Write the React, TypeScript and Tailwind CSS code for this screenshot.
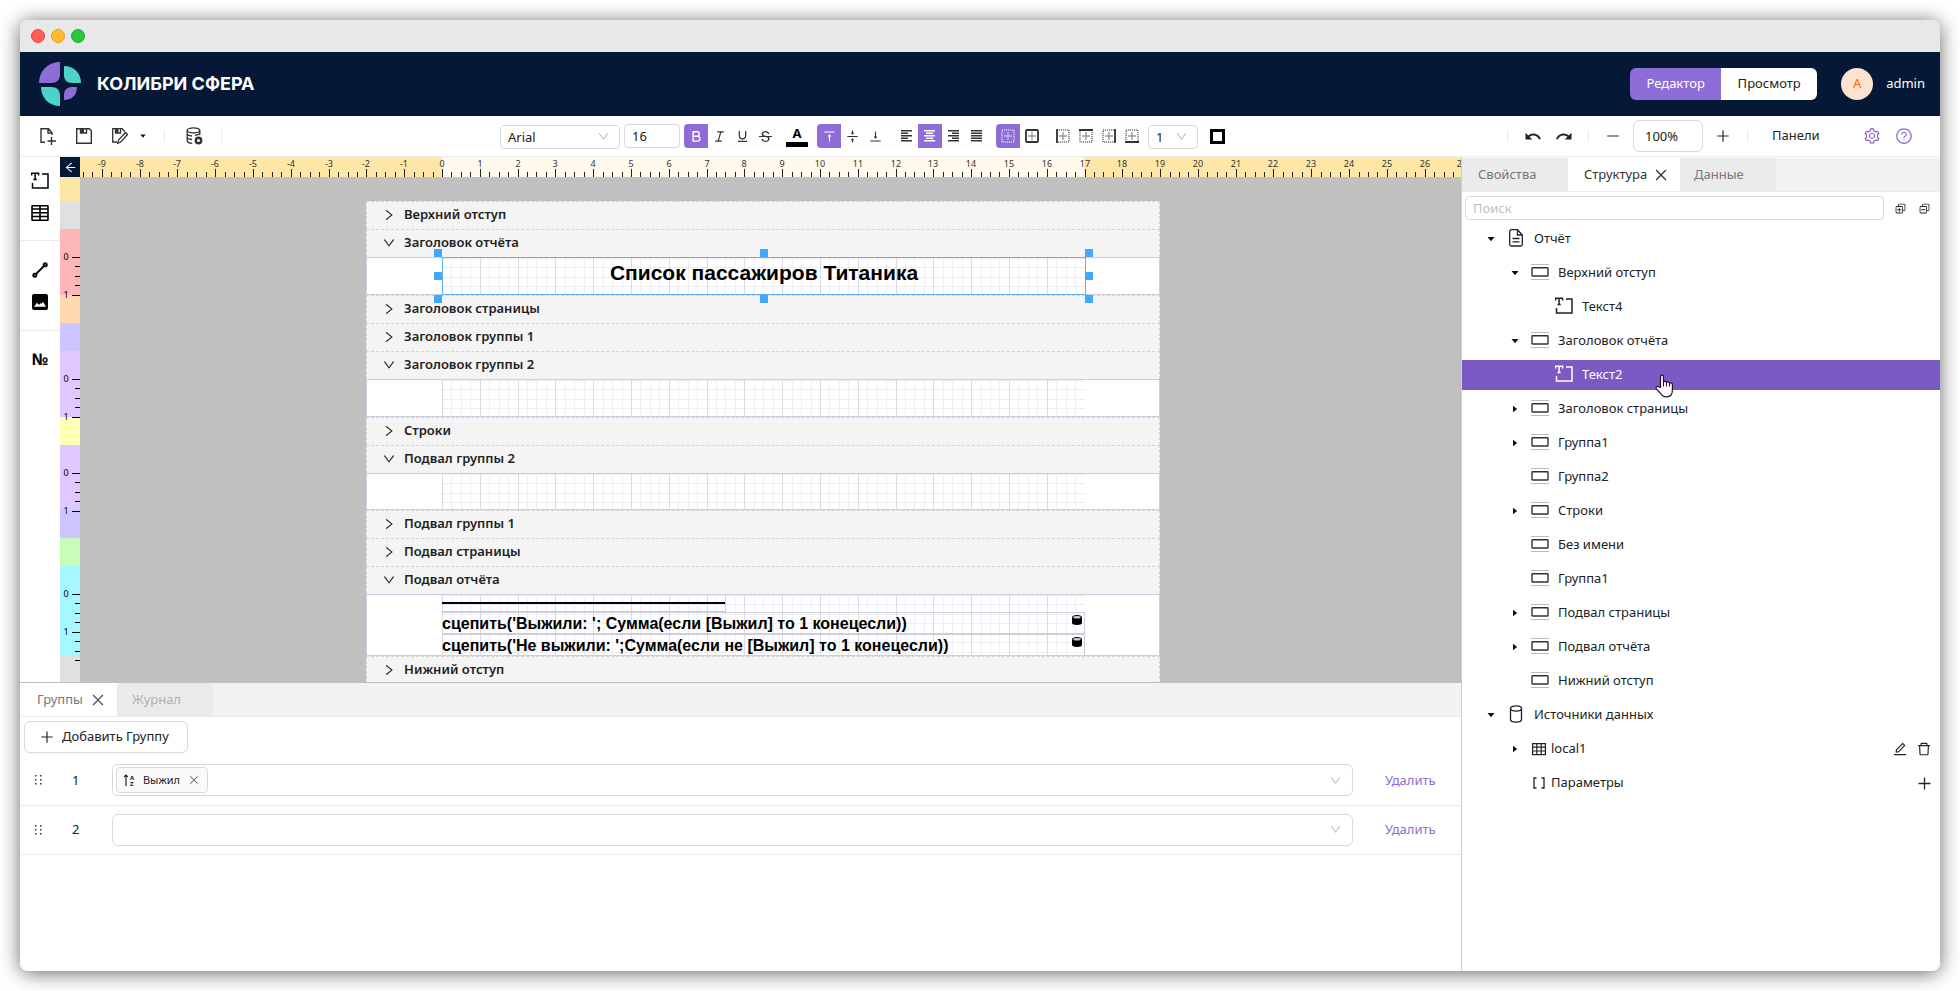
import { useEffect, useRef, useState } from "react";
import type { ReactNode } from "react";
import {
  AiOutlineArrowLeft,
  AiOutlineBold,
  AiOutlineClose,
  AiOutlineDelete,
  AiOutlineDown,
  AiOutlineEdit,
  AiOutlineItalic,
  AiOutlineMinus,
  AiOutlinePlus,
  AiOutlineQuestionCircle,
  AiOutlineRight,
  AiOutlineSetting,
  AiOutlineStrikethrough,
  AiOutlineUnderline,
  AiOutlineVerticalAlignBottom,
  AiOutlineVerticalAlignMiddle,
  AiOutlineVerticalAlignTop,
} from "react-icons/ai";
import { MdRedo, MdUndo } from "react-icons/md";
import { VscCollapseAll, VscExpandAll } from "react-icons/vsc";

const CM = 96 / 2.54;

type Band = { title: string; color: string; body?: number; kind?: "title" | "empty" | "totals" };

const BANDS: Band[] = [
  { title: "Верхний отступ", color: "#e0e0e0" },
  { title: "Заголовок отчёта", color: "#ffb6b6", body: 38, kind: "title" },
  { title: "Заголовок страницы", color: "#ffd8b0" },
  { title: "Заголовок группы 1", color: "#cdc5ff" },
  { title: "Заголовок группы 2", color: "#dfc7ff", body: 38, kind: "empty" },
  { title: "Строки", color: "#ffffb5" },
  { title: "Подвал группы 2", color: "#dfc7ff", body: 37, kind: "empty" },
  { title: "Подвал группы 1", color: "#cdc5ff" },
  { title: "Подвал страницы", color: "#c7fdb9" },
  { title: "Подвал отчёта", color: "#a6f8ff", body: 62, kind: "totals" },
  { title: "Нижний отступ", color: "#e0e0e0" },
];

type Node = {
  label: string;
  level: number;
  icon: "report" | "band" | "text" | "db" | "grid" | "params";
  open?: boolean;
  selected?: boolean;
};

const TREE: Node[] = [
  { label: "Отчёт", level: 0, icon: "report", open: true },
  { label: "Верхний отступ", level: 1, icon: "band", open: true },
  { label: "Текст4", level: 2, icon: "text" },
  { label: "Заголовок отчёта", level: 1, icon: "band", open: true },
  { label: "Текст2", level: 2, icon: "text", selected: true },
  { label: "Заголовок страницы", level: 1, icon: "band", open: false },
  { label: "Группа1", level: 1, icon: "band", open: false },
  { label: "Группа2", level: 1, icon: "band" },
  { label: "Строки", level: 1, icon: "band", open: false },
  { label: "Без имени", level: 1, icon: "band" },
  { label: "Группа1", level: 1, icon: "band" },
  { label: "Подвал страницы", level: 1, icon: "band", open: false },
  { label: "Подвал отчёта", level: 1, icon: "band", open: false },
  { label: "Нижний отступ", level: 1, icon: "band" },
  { label: "Источники данных", level: 0, icon: "db", open: true },
  { label: "local1", level: 1, icon: "grid", open: false },
  { label: "Параметры", level: 1, icon: "params" },
];

/* ---------- icons ---------- */

function Logo() {
  return (
    <svg width="42" height="44" viewBox="0 0 42 44" aria-hidden="true">
      <path d="M21 0v12c0 6-3 9-9 9H0C0 9 9 0 21 0z" fill="#8e6dd6" />
      <path d="M25 4c10 0 17 7 17 17h-9c-5 0-8-3-8-8z" fill="#4dd2c8" />
      <path d="M2 25h10c6 0 9 3 9 9v10C10 44 2 36 2 25z" fill="#4dd2c8" />
      <path d="M38 25c0 8-5 13-13 13v-5c0-5 3-8 8-8z" fill="#8e6dd6" />
    </svg>
  );
}

function NewFileIcon() {
  return (
    <svg width="18" height="18" viewBox="0 0 18 18" fill="none" stroke="#333" strokeWidth="1.4" aria-hidden="true">
      <path d="M6 15.3H2V1.7h7.5l3.5 4V8M9 2v4h4M12.5 10v8M8.500 14h8.500" />
    </svg>
  );
}

function SaveIcon() {
  return (
    <svg width="16" height="16" viewBox="0 0 16 16" fill="none" stroke="#333" strokeWidth="1.4" aria-hidden="true">
      <path d="M.7.7h12.600l2 2v12.600H.7z" />
      <path d="M4.500 1v4h6V1" />
      <path d="M4.500 1h3.500v4H4.500z" fill="#333" stroke="none" />
    </svg>
  );
}

function SaveAsIcon() {
  return (
    <svg width="16" height="16" viewBox="0 0 16 16" fill="none" stroke="#333" strokeWidth="1.3" aria-hidden="true">
      <path d="M5 14H.7V.7h9.500l2 2V4M3.500 1v4h5V1" />
      <path d="M3.500 1h3v4h-3z" fill="#333" stroke="none" />
      <path d="M5.700 15.300l1-3.500 6.800-7.300 2 2-6.800 7.500z" />
    </svg>
  );
}

function DbSettingsIcon() {
  return (
    <svg width="17" height="18" viewBox="0 0 17 18" fill="none" stroke="#333" strokeWidth="1.3" aria-hidden="true">
      <ellipse cx="7.500" cy="3.300" rx="6.300" ry="2.500" />
      <path d="M1.200 3.500v3c0 1.200 2 2.300 4.800 2.500M13.800 3.500V8M1.200 7v3c0 1.200 2 2.300 4.800 2.500M1.200 10.500v3c0 1.500 2 2.700 5 2.900M9 8.300c2-.2 4-.8 4.800-1.800" />
      <circle cx="12.500" cy="13.500" r="2.700" strokeWidth="2.400" />
    </svg>
  );
}

function TextBoxIcon() {
  return (
    <svg width="18" height="18" viewBox="0 0 18 18" fill="none" stroke="currentColor" strokeWidth="1.5" aria-hidden="true">
      <path d="M11 2h6v14H1.500v-5" />
      <path d="M.6 3.500V1.200h7v2.300M4.100 1.200v6.300M2.500 7.500h3.200" />
    </svg>
  );
}

function TableIcon() {
  return (
    <svg width="18" height="18" viewBox="0 0 18 18" fill="none" stroke="currentColor" strokeWidth="1.600" aria-hidden="true">
      <rect x="1" y="1.800" width="16" height="14.400" rx=".5" />
      <path d="M1 5h16M1 8.800h16M1 12.500h16M9 2v14" />
    </svg>
  );
}

function LineIcon() {
  return (
    <svg width="16" height="16" viewBox="0 0 16 16" stroke="#000" strokeWidth="1.600" fill="#666" aria-hidden="true">
      <path d="M3 13L13 3" strokeWidth="1.800" />
      <circle cx="2.800" cy="13.200" r="1.700" />
      <circle cx="13.200" cy="2.800" r="1.700" />
    </svg>
  );
}

function ImageIcon() {
  return (
    <svg width="16" height="16" viewBox="0 0 16 16" aria-hidden="true">
      <rect width="16" height="16" rx="2" />
      <path d="M2 12.800l3-4 2 2.200 1.500-2 1 1 1.500-2.200 3 5z" fill="#fff" />
    </svg>
  );
}

function AlignIcon({ kind }: { kind: "left" | "center" | "right" | "justify" }) {
  const short = kind === "justify" ? 11 : 7;
  const shift = kind === "center" ? 2 : kind === "right" ? 4 : 0;
  return (
    <svg width="12" height="12" viewBox="0 0 12 12" fill="currentColor" aria-hidden="true">
      {[0, 1, 2, 3, 4].map((i) => {
        const long = i % 2 === 0;
        return <rect key={i} x={long ? 0 : shift} y={i * 2.5} width={long ? 11 : short} height="1.5" />;
      })}
    </svg>
  );
}

function BorderIcon({ side }: { side: "none" | "all" | "left" | "top" | "right" | "bottom" }) {
  const edges = { left: "M1 0v14", top: "M0 1h14", right: "M13 0v14", bottom: "M0 13h14" };
  return (
    <svg width="14" height="14" viewBox="0 0 14 14" fill="none" stroke="currentColor" aria-hidden="true">
      {side === "all" ? (
        <rect x="1" y="1" width="12" height="12" rx="1" strokeWidth="1.8" />
      ) : (
        <rect x="1" y="1" width="12" height="12" strokeDasharray="1.2 .8" />
      )}
      <path d="M7 3v8M3 7h8" strokeWidth="1.4" strokeOpacity=".5" />
      {side !== "all" && side !== "none" && <path d={edges[side]} strokeWidth="1.8" />}
    </svg>
  );
}

function BandIcon() {
  return (
    <svg width="18" height="18" viewBox="0 0 18 18" fill="none" stroke="#333" aria-hidden="true">
      <path d="M.5 1.500h17M.5 16.500h17" stroke="#777" strokeDasharray="1 1" />
      <rect x="1" y="4.700" width="16" height="8.300" rx=".5" strokeWidth="1.400" />
    </svg>
  );
}

function ReportIcon() {
  return (
    <svg width="14" height="18" viewBox="0 0 14 18" fill="none" stroke="#222" strokeWidth="1.300" aria-hidden="true">
      <path d="M8.500.7H2.500Q.7.700.7 2.500v13q0 1.500 1.800 1.500h9q1.800 0 1.800-1.500V6zM8.500 1v5h4.500M3.500 9.500h7M3.500 12.800h7" />
    </svg>
  );
}

function DbIcon() {
  return (
    <svg width="14" height="18" viewBox="0 0 14 18" fill="none" stroke="#222" strokeWidth="1.300" aria-hidden="true">
      <ellipse cx="7" cy="3.500" rx="5.500" ry="2.600" />
      <path d="M1.500 3.500v11c0 1.500 2.300 2.600 5.500 2.600s5.500-1.100 5.500-2.600v-11" />
    </svg>
  );
}

function GridIcon() {
  return (
    <svg width="14" height="14" viewBox="0 0 14 14" fill="none" stroke="#222" strokeWidth="1.200" aria-hidden="true">
      <path d="M.6 1.600h12.800v11H.6zM.6 5.200h12.800M.6 9h12.800M4.800 1.600v11M9.200 1.600v11" />
    </svg>
  );
}

function ParamsIcon() {
  return (
    <svg width="14" height="14" viewBox="0 0 14 14" fill="none" stroke="#222" strokeWidth="1.300" aria-hidden="true">
      <path d="M4.500 2H2v10h2.500M9.500 2H12v10H9.500" />
    </svg>
  );
}

function SourceBadge() {
  return (
    <svg width="10" height="10" viewBox="0 0 10 10" aria-hidden="true">
      <path d="M0 2.300C0 1 2 0 5 0s5 1 5 2.300v5.400C10 9 8 10 5 10S0 9 0 7.700z" />
      <ellipse cx="5" cy="2.300" rx="3.800" ry="1.200" fill="#ccc" />
    </svg>
  );
}

function Caret({ open, size = 8 }: { open: boolean; size?: number }) {
  return (
    <svg width={size} height={size} viewBox="0 0 8 8" fill="#111" aria-hidden="true">
      <path d={open ? "M.5 2h7L4 6.200z" : "M2 .8v6.400L6.200 4z"} />
    </svg>
  );
}

function DragDots() {
  return (
    <svg width="8" height="12" viewBox="0 0 8 12" fill="#333" aria-hidden="true">
      {[1, 5, 9].map((y) => (
        <path key={y} d={`M1 ${y}h1.500v1.500H1zM6 ${y}h1.500v1.500H6z`} />
      ))}
    </svg>
  );
}

function SortIcon() {
  return (
    <svg width="11" height="13" viewBox="0 0 11 13" fill="none" stroke="#111" strokeWidth="1.100" aria-hidden="true">
      <path d="M2 12V1M.3 2.800L2 1l1.700 1.800" />
      <text x="6" y="5.500" fontSize="6" fontWeight="700" fill="#111" stroke="none">
        A
      </text>
      <text x="6" y="12" fontSize="6" fontWeight="700" fill="#111" stroke="none">
        Z
      </text>
    </svg>
  );
}

function HandCursor() {
  return (
    <svg width="19" height="24" viewBox="0 0 19 24" aria-hidden="true">
      <path
        d="M5.500 13.500V3c0-2.500 3-2.500 3 0v5c.5-1 2.700-1 3 .5.600-1 2.700-.6 3 .8.800-.8 2.900-.3 2.900 1.400v5.300c0 4-2.200 6.800-6 6.800-3 0-4.500-1-6-3.600L1.300 14.800c-1-2 1-3 2.300-2z"
        fill="#fff"
        stroke="#1d1533"
        strokeWidth="1.200"
      />
      <path d="M8.500 8v4.500M11.500 8.800v3.700M14.500 9.500v3" stroke="#1d1533" strokeWidth="1.100" />
    </svg>
  );
}

/* ---------- toolbar ---------- */

function Divider({ className = "" }: { className?: string }) {
  return <span className={`h-3 w-px shrink-0 bg-[#ebebeb] ${className}`} />;
}

function ToolButton({
  label,
  active = false,
  className = "",
  children,
}: {
  label: string;
  active?: boolean;
  className?: string;
  children: ReactNode;
}) {
  return (
    <button
      type="button"
      aria-label={label}
      aria-pressed={active}
      className={`flex h-6 shrink-0 items-center justify-center ${
        active ? "w-6 bg-[#8e6dd6] text-white" : "w-[23px] text-[#333]"
      } ${className}`}
    >
      {children}
    </button>
  );
}

function Toolbar() {
  return (
    <div className="flex h-[41px] shrink-0 items-center justify-between border-b border-[#ebebeb]">
      <div className="flex items-center">
        <div className="ml-2.5 flex w-[470px] items-center">
          <button type="button" aria-label="Новый отчёт" className="flex w-9 justify-center">
            <NewFileIcon />
          </button>
          <button type="button" aria-label="Сохранить" className="flex w-9 justify-center">
            <SaveIcon />
          </button>
          <button type="button" aria-label="Сохранить как" className="flex w-9 justify-center">
            <SaveAsIcon />
          </button>
          <button type="button" aria-label="Ещё" className="flex w-2.5 justify-center">
            <Caret open size={6} />
          </button>
          <Divider className="ml-4" />
          <button type="button" aria-label="Источники" className="ml-5 flex w-[18px] justify-center">
            <DbSettingsIcon />
          </button>
          <Divider className="ml-[18px]" />
        </div>
        <div className="relative">
          <select
            aria-label="Шрифт"
            className="h-6 w-[120px] appearance-none rounded border border-[#d9d9d9] bg-white px-[7px] text-[13px] leading-5"
          >
            <option>Arial</option>
          </select>
          <AiOutlineDown size={13} className="pointer-events-none absolute top-1.5 right-2.5 text-[#bfbfbf]" />
        </div>
        <input
          aria-label="Размер шрифта"
          defaultValue="16"
          className="ml-1 h-6 w-14 rounded border border-[#d9d9d9] px-[7px] text-[13px]"
        />
        <ToolButton label="Полужирный" active className="ml-1 rounded-l">
          <AiOutlineBold size={15} />
        </ToolButton>
        <ToolButton label="Курсив">
          <AiOutlineItalic size={15} />
        </ToolButton>
        <ToolButton label="Подчёркнутый">
          <AiOutlineUnderline size={15} />
        </ToolButton>
        <ToolButton label="Зачёркнутый">
          <AiOutlineStrikethrough size={15} />
        </ToolButton>
        <button type="button" aria-label="Цвет текста" className="ml-[9px] flex w-[22px] flex-col items-center text-black">
          <span className="text-[13px] leading-4 font-bold">A</span>
          <span className="mt-px h-[5px] w-full bg-black" />
        </button>
        <ToolButton label="По верхнему краю" active className="ml-[9px] rounded-l">
          <AiOutlineVerticalAlignTop size={15} />
        </ToolButton>
        <ToolButton label="По середине">
          <AiOutlineVerticalAlignMiddle size={15} />
        </ToolButton>
        <ToolButton label="По нижнему краю">
          <AiOutlineVerticalAlignBottom size={15} />
        </ToolButton>
        <ToolButton label="По левому краю" className="ml-2">
          <AlignIcon kind="left" />
        </ToolButton>
        <ToolButton label="По центру" active>
          <AlignIcon kind="center" />
        </ToolButton>
        <ToolButton label="По правому краю">
          <AlignIcon kind="right" />
        </ToolButton>
        <ToolButton label="По ширине">
          <AlignIcon kind="justify" />
        </ToolButton>
        <ToolButton label="Без границ" active className="ml-2 rounded-l">
          <BorderIcon side="none" />
        </ToolButton>
        <ToolButton label="Все границы">
          <BorderIcon side="all" />
        </ToolButton>
        <ToolButton label="Левая граница" className="ml-2">
          <BorderIcon side="left" />
        </ToolButton>
        <ToolButton label="Верхняя граница">
          <BorderIcon side="top" />
        </ToolButton>
        <ToolButton label="Правая граница">
          <BorderIcon side="right" />
        </ToolButton>
        <ToolButton label="Нижняя граница">
          <BorderIcon side="bottom" />
        </ToolButton>
        <div className="relative ml-[5px]">
          <select
            aria-label="Толщина границы"
            className="h-6 w-[50px] appearance-none rounded border border-[#d9d9d9] bg-white px-[7px] text-[13px] leading-5"
          >
            <option>1</option>
          </select>
          <AiOutlineDown size={13} className="pointer-events-none absolute top-1.5 right-2.5 text-[#bfbfbf]" />
        </div>
        <button type="button" aria-label="Цвет границы" className="ml-3 size-[15px] border-3 border-black" />
      </div>

      <div className="flex items-center text-[#222]">
        <Divider />
        <button type="button" aria-label="Отменить" className="ml-4 flex w-[18px] justify-center">
          <MdUndo size={19} />
        </button>
        <button type="button" aria-label="Повторить" className="ml-[13px] flex w-[18px] justify-center">
          <MdRedo size={19} />
        </button>
        <Divider className="ml-[15px]" />
        <button type="button" aria-label="Уменьшить" className="ml-4 flex w-4 justify-center">
          <AiOutlineMinus size={18} />
        </button>
        <input
          aria-label="Масштаб"
          defaultValue="100%"
          className="ml-3 h-8 w-[70px] rounded-md border border-[#d9d9d9] px-[11px] text-[13px]"
        />
        <button type="button" aria-label="Увеличить" className="ml-3 flex w-4 justify-center">
          <AiOutlinePlus size={18} />
        </button>
        <Divider className="ml-4" />
        <button type="button" className="ml-2 w-[100px] px-4 text-left text-[13px]">
          Панели
        </button>
        <button type="button" aria-label="Настройки" className="ml-2 flex w-4 justify-center text-[#8e6dd6]">
          <AiOutlineSetting size={18} className="shrink-0" />
        </button>
        <button type="button" aria-label="Справка" className="mr-7 ml-4 flex w-4 justify-center text-[#8e6dd6]">
          <AiOutlineQuestionCircle size={18} className="shrink-0" />
        </button>
      </div>
    </div>
  );
}

/* ---------- rulers and canvas ---------- */

const ZERO_X = 362;
const HEADER = 28;

function HorizontalRuler() {
  const ref = useRef<SVGSVGElement>(null);
  const [width, setWidth] = useState(1380);

  useEffect(() => {
    const el = ref.current;
    if (!el) return;
    const observer = new ResizeObserver(() => setWidth(el.clientWidth));
    observer.observe(el);
    return () => observer.disconnect();
  }, []);

  const first = -38;
  const last = Math.floor(((width - ZERO_X + 3) * 4) / CM);
  const quarters = Array.from({ length: Math.max(0, last - first + 1) }, (_, i) => i + first);
  return (
    <svg ref={ref} width="100%" height="20" className="block bg-[#fee6a6]" aria-hidden="true">
      <rect x={ZERO_X} width={17 * CM} height="20" fill="#fffaec" />
      {quarters.map((q) => {
        const x = Math.round(ZERO_X + (q * CM) / 4);
        const major = q % 4 === 0;
        return (
          <g key={q}>
            <rect x={x} y={major ? 12 : 15} width="1" height={major ? 8 : 5} fill="#222" />
            {major && (
              <text x={x} y="10" textAnchor="middle" fontSize="9" fill="#333">
                {q / 4}
              </text>
            )}
          </g>
        );
      })}
    </svg>
  );
}

function VerticalRuler() {
  let offset = 24;
  const items = BANDS.map((band) => {
    const top = offset;
    const body = band.body ?? 0;
    offset += HEADER + body;
    return { ...band, top, body };
  });
  return (
    <div className="w-5 shrink-0 overflow-hidden">
      <svg width="20" height={offset} className="block bg-[#fee6a6]" aria-hidden="true">
        {items.map((b) => (
          <rect key={b.title} y={b.top} width="20" height={HEADER + b.body} fill={b.color} />
        ))}
        {items
          .filter((b) => b.body > 0)
          .map((b) =>
            Array.from({ length: Math.floor((b.body + 5) / (CM / 4)) + 1 }, (_, i) => {
              const y = Math.round(b.top + HEADER + (i * CM) / 4);
              const major = i % 4 === 0;
              return (
                <g key={`${b.title}-${i}`}>
                  <rect x={major ? 12 : 15} y={y} width={major ? 8 : 5} height="1" />
                  {major && (
                    <text x="6" y={y + 3} textAnchor="middle" fontSize="9">
                      {i / 4}
                    </text>
                  )}
                </g>
              );
            }),
          )}
      </svg>
    </div>
  );
}

function Grid({ height }: { height: number }) {
  const columns = Array.from({ length: 69 }, (_, i) => i);
  const rows = Array.from({ length: Math.floor(height / (CM / 4)) + 1 }, (_, i) => i);
  return (
    <svg width="643" height={height} className="block" aria-hidden="true">
      {rows.map((i) => (
        <rect key={i} y={Math.round((i * CM) / 4)} width="643" height="1" fill="#eeeef0" />
      ))}
      {columns.map((i) => (
        <rect
          key={i}
          x={Math.round((i * CM) / 4)}
          width="1"
          height={height}
          fill={i % 4 === 0 ? "#dcdce0" : "#efeff1"}
        />
      ))}
    </svg>
  );
}

const HANDLES = [
  "-left-[9px] -top-[9px]",
  "left-1/2 -ml-1 -top-[9px]",
  "-right-2 -top-[9px]",
  "-left-[9px] top-1/2 -mt-1",
  "-right-2 top-1/2 -mt-1",
  "-left-[9px] -bottom-[9px]",
  "left-1/2 -ml-1 -bottom-[9px]",
  "-right-2 -bottom-[9px]",
];

const FORMULAS = [
  "сцепить('Выжили: '; Сумма(если [Выжил] то 1 конецесли))",
  "сцепить('Не выжили: ';Сумма(если не [Выжил] то 1 конецесли))",
];

function BandBody({ band }: { band: Band }) {
  const height = band.body ?? 0;
  return (
    <div className="relative flex border border-[#cfcce0] bg-white pl-[75px] text-black" style={{ height }}>
      <div className="overflow-hidden">
        <Grid height={height} />
      </div>
      {band.kind === "title" && (
        <div className="absolute -top-px -bottom-px left-[75px] z-10 w-[644px] border border-[#5eb0f7] text-center font-[Liberation_Sans,Arial,sans-serif] text-[21px] leading-[30px] font-bold">
          Список пассажиров Титаника
          {HANDLES.map((pos) => (
            <span key={pos} className={`absolute size-2 bg-[#40a9ff] ${pos}`} />
          ))}
        </div>
      )}
      {band.kind === "totals" && (
        <div className="absolute top-0 left-[75px] w-[643px] font-[Liberation_Sans,Arial,sans-serif] text-base leading-[21px] font-bold">
          <div className="h-[17px] w-[284px] border-r border-b border-[#cfcce0] pt-[7px]">
            <div className="h-0.5 bg-black" />
          </div>
          {FORMULAS.map((formula) => (
            <div key={formula} className="flex h-[22px] justify-between border-t border-r border-b border-[#cfcce0]">
              <span className="whitespace-nowrap">{formula}</span>
              <span className="pt-0.5 pr-0.5">
                <SourceBadge />
              </span>
            </div>
          ))}
        </div>
      )}
    </div>
  );
}

function Canvas() {
  return (
    <div className="min-w-0 flex-1 overflow-hidden bg-[#c0c0c0] pt-6 pl-[286px]">
      <div className="w-[794px] bg-[#f4f4f4]">
        {BANDS.map((band) => (
          <section key={band.title}>
            <button
              type="button"
              aria-expanded={!!band.body}
              className="flex h-7 w-full items-center gap-2 border border-b-0 border-dashed border-[#d4d4d4] pb-0.5 pl-[15px] text-left text-[13px] font-semibold text-[#222]"
            >
              {band.body ? <AiOutlineDown size={14} /> : <AiOutlineRight size={14} />}
              {band.title}
            </button>
            {band.body && <BandBody band={band} />}
          </section>
        ))}
      </div>
    </div>
  );
}

function ElementPalette() {
  return (
    <div className="flex w-10 shrink-0 flex-col bg-white text-black">
      <div className="flex h-[84px] flex-col items-center gap-3.5 border-b border-[#ebebeb] pt-[15px]">
        <button type="button" aria-label="Текст">
          <TextBoxIcon />
        </button>
        <button type="button" aria-label="Таблица">
          <TableIcon />
        </button>
      </div>
      <div className="flex h-[90px] flex-col items-center gap-4 border-b border-[#ebebeb] pt-[21px]">
        <button type="button" aria-label="Линия">
          <LineIcon />
        </button>
        <button type="button" aria-label="Изображение">
          <ImageIcon />
        </button>
      </div>
      <button type="button" className="mt-[18px] text-center text-base leading-5 font-bold">
        №
      </button>
    </div>
  );
}

/* ---------- groups panel ---------- */

function GroupsPanel() {
  const [groups, setGroups] = useState([
    { id: 1, field: "Выжил" },
    { id: 2, field: "" },
  ]);
  return (
    <section className="h-[289px] shrink-0 overflow-hidden border-t border-[#bfbfbf] bg-white text-[13px]">
      <div role="tablist" className="flex h-[34px] border-b border-[#ebebeb] bg-[#f2f2f2]">
        <button
          type="button"
          role="tab"
          aria-selected="true"
          className="flex w-[97px] items-center justify-between bg-white pr-[11px] pl-[17px] text-[#777]"
        >
          Группы
          <AiOutlineClose size={16} className="text-[#555]" />
        </button>
        <button type="button" role="tab" aria-selected="false" className="w-24 bg-[#ebebeb] px-[15px] text-left text-[#b0b0b0]">
          Журнал
        </button>
      </div>
      <button
        type="button"
        onClick={() => setGroups([...groups, { id: groups.length + 1, field: "" }])}
        className="mt-1 ml-1 flex h-8 w-[164px] items-center gap-[7px] rounded-md border border-[#d9d9d9] pl-3.5 whitespace-nowrap text-[#222] shadow-[0_2px_0_rgba(0,0,0,0.02)]"
      >
        <AiOutlinePlus size={16} className="shrink-0" />
        Добавить Группу
      </button>
      <table className="mt-[3px] w-full text-[#222]">
        <tbody>
          {groups.map((g) => (
            <tr key={g.id} className="h-[49px] border-b border-[#ebebeb]">
              <td className="w-9 pl-3.5">
                <DragDots />
              </td>
              <td className="w-14 pl-4">{g.id}</td>
              <td>
                <label className="flex h-8 items-center rounded-md border border-[#d9d9d9] px-[3px]">
                  {g.field && (
                    <span className="flex h-[26px] w-[92px] shrink-0 items-center justify-between rounded border border-[#d9d9d9] bg-[#fafafa] px-[7px] text-[11px]">
                      <SortIcon />
                      {g.field}
                      <AiOutlineClose size={12} className="text-[#777]" />
                    </span>
                  )}
                  <input
                    role="combobox"
                    aria-expanded="false"
                    aria-label={`Поля группы ${g.id}`}
                    className="min-w-0 flex-1 outline-none"
                  />
                  <AiOutlineDown size={13} className="mr-[7px] text-[#bfbfbf]" />
                </label>
              </td>
              <td className="w-[108px] pl-8">
                <button type="button" className="text-[#8e6dd6]">
                  Удалить
                </button>
              </td>
            </tr>
          ))}
        </tbody>
      </table>
    </section>
  );
}

/* ---------- structure panel ---------- */

function NodeIcon({ icon }: { icon: Node["icon"] }) {
  switch (icon) {
    case "report":
      return <ReportIcon />;
    case "band":
      return <BandIcon />;
    case "text":
      return <TextBoxIcon />;
    case "db":
      return <DbIcon />;
    case "grid":
      return <GridIcon />;
    default:
      return <ParamsIcon />;
  }
}

const INDENT = ["pl-[25px]", "pl-[49px]", "pl-[73px]"];

function TreeRow({ node }: { node: Node }) {
  const small = node.icon === "grid" || node.icon === "params";
  return (
    <li
      role="treeitem"
      aria-selected={!!node.selected}
      aria-expanded={node.open}
      className={`relative flex h-[30px] items-center ${INDENT[node.level]} ${
        node.selected ? "bg-[#7c5ac4] text-white" : "text-[#222]"
      }`}
    >
      <span className="w-2">{node.open !== undefined && <Caret open={node.open} />}</span>
      <span className={small ? "ml-3 flex w-4 justify-center" : "mb-0.5 ml-[11px] flex w-5 justify-center"}>
        <NodeIcon icon={node.icon} />
      </span>
      <span className={small ? "ml-1" : "ml-2"}>{node.label}</span>
      {node.icon === "grid" && (
        <span className="mr-2 ml-auto flex gap-2">
          <button type="button" aria-label="Изменить">
            <AiOutlineEdit size={16} />
          </button>
          <button type="button" aria-label="Удалить источник">
            <AiOutlineDelete size={16} />
          </button>
        </span>
      )}
      {node.icon === "params" && (
        <button type="button" aria-label="Добавить параметр" className="mr-[7px] ml-auto">
          <AiOutlinePlus size={17} />
        </button>
      )}
      {node.selected && (
        <span className="pointer-events-none absolute top-3.5 left-[193px] z-10">
          <HandCursor />
        </span>
      )}
    </li>
  );
}

function StructurePanel() {
  return (
    <aside className="flex w-[479px] shrink-0 flex-col border-l border-[#cfcfcf] bg-white text-[13px]">
      <div role="tablist" className="mt-px flex h-[34px] border-b border-[#ebebeb] bg-[#f2f2f2] text-[#777]">
        <button type="button" role="tab" aria-selected="false" className="w-[106px] bg-[#ebebeb] px-4 text-left">
          Свойства
        </button>
        <button
          type="button"
          role="tab"
          aria-selected="true"
          className="flex w-28 items-center justify-between bg-white pr-[11px] pl-4 text-[#333]"
        >
          Структура
          <AiOutlineClose size={16} />
        </button>
        <button type="button" role="tab" aria-selected="false" className="w-24 bg-[#ebebeb] px-3.5 text-left">
          Данные
        </button>
      </div>
      <div className="mt-1 flex items-center pr-[9px] pl-[3px]">
        <input
          type="search"
          aria-label="Поиск"
          placeholder="Поиск"
          className="h-6 min-w-0 flex-1 rounded border border-[#d9d9d9] px-[7px] placeholder:text-[#bfbfbf]"
        />
        <button type="button" aria-label="Развернуть всё" className="ml-2.5">
          <VscExpandAll size={13} />
        </button>
        <button type="button" aria-label="Свернуть всё" className="ml-[11px]">
          <VscCollapseAll size={13} />
        </button>
      </div>
      <ul role="tree" className="mt-1 flex flex-col gap-1">
        {TREE.map((node, i) => (
          <TreeRow key={i} node={node} />
        ))}
      </ul>
    </aside>
  );
}

export default function App() {
  return (
    <div className="h-screen bg-white p-5 font-[Noto_Sans,sans-serif] text-[#222]">
      <div className="flex h-full flex-col overflow-hidden rounded-lg bg-white shadow-[0_2px_20px_rgba(0,0,0,0.6)]">
        <div className="flex h-8 shrink-0 items-center gap-1.5 bg-[#e8e8e8] pl-[11px]">
          <span className="size-3.5 rounded-full border border-[#e0443e] bg-[#ff5f57]" />
          <span className="size-3.5 rounded-full border border-[#dea123] bg-[#febc2e]" />
          <span className="size-3.5 rounded-full border border-[#1aab29] bg-[#28c840]" />
        </div>
        <header className="flex h-16 shrink-0 items-center bg-[#051836] pr-[15px] pl-[19px] text-[13px] text-white">
          <Logo />
          <h1 className="ml-4 font-[Inter,sans-serif] text-lg font-bold">КОЛИБРИ СФЕРА</h1>
          <div className="ml-auto flex h-8 overflow-hidden rounded-md">
            <button type="button" className="w-[91px] bg-[#8e6dd6]">
              Редактор
            </button>
            <button type="button" className="w-24 bg-white text-[#222]">
              Просмотр
            </button>
          </div>
          <span className="ml-6 flex size-8 items-center justify-center rounded-full bg-[#fde3cf] text-[#f56a00]">A</span>
          <span className="ml-[13px]">admin</span>
        </header>
        <Toolbar />
        <div className="flex min-h-0 flex-1">
          <main className="flex min-w-0 flex-1 flex-col">
            <div className="flex min-h-0 flex-1">
              <ElementPalette />
              <div className="flex min-w-0 flex-1 flex-col">
                <div className="flex h-5 shrink-0">
                  <button
                    type="button"
                    aria-label="Назад"
                    className="flex w-5 shrink-0 items-center justify-center bg-[#051836] text-white"
                  >
                    <AiOutlineArrowLeft size={13} />
                  </button>
                  <div className="min-w-0 flex-1 overflow-hidden">
                    <HorizontalRuler />
                  </div>
                </div>
                <div className="flex min-h-0 flex-1">
                  <VerticalRuler />
                  <Canvas />
                </div>
              </div>
            </div>
            <GroupsPanel />
          </main>
          <StructurePanel />
        </div>
      </div>
    </div>
  );
}
